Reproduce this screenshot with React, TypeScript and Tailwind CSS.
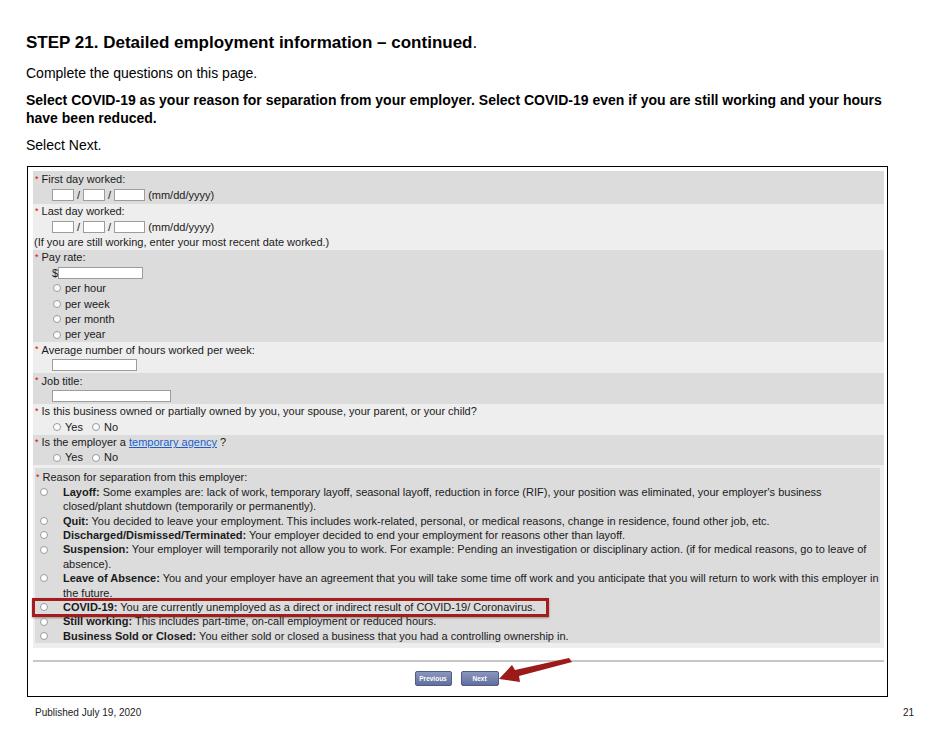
import React from "react";

const REASONS: { b: string; t: string[] }[] = [
  {
    b: "Layoff:",
    t: [
      " Some examples are: lack of work, temporary layoff, seasonal layoff, reduction in force (RIF), your position was eliminated, your employer's business",
      "closed/plant shutdown (temporarily or permanently).",
    ],
  },
  { b: "Quit:", t: [" You decided to leave your employment. This includes work-related, personal, or medical reasons, change in residence, found other job, etc."] },
  { b: "Discharged/Dismissed/Terminated:", t: [" Your employer decided to end your employment for reasons other than layoff."] },
  {
    b: "Suspension:",
    t: [
      " Your employer will temporarily not allow you to work. For example: Pending an investigation or disciplinary action. (if for medical reasons, go to leave of",
      "absence).",
    ],
  },
  {
    b: "Leave of Absence:",
    t: [
      " You and your employer have an agreement that you will take some time off work and you anticipate that you will return to work with this employer in",
      "the future.",
    ],
  },
  { b: "COVID-19:", t: [" You are currently unemployed as a direct or indirect result of COVID-19/ Coronavirus."] },
  { b: "Still working:", t: [" This includes part-time, on-call employment or reduced hours."] },
  { b: "Business Sold or Closed:", t: [" You either sold or closed a business that you had a controlling ownership in."] },
];

function Radio() {
  return <span className="inline-block h-[8px] w-[8px] rounded-full border border-[#9a9a9a] bg-white" />;
}

function Label({ children }: { children: React.ReactNode }) {
  return (
    <div className="flex h-[15.4px] items-center pl-[2px]">
      <span className="mr-[3px] text-[9px] text-[#e00000]">*</span>
      <span>{children}</span>
    </div>
  );
}

function Box({ w }: { w: number }) {
  return <span className="inline-block h-[12px] border border-[#9c9c9c] bg-white" style={{ width: w }} />;
}

function DateLine() {
  return (
    <div className="flex h-[15.4px] items-center pl-[19px]">
      <Box w={22} />
      <span className="mx-[3px]">/</span>
      <Box w={22} />
      <span className="mx-[3px]">/</span>
      <Box w={31} />
      <span className="ml-[3px]">(mm/dd/yyyy)</span>
    </div>
  );
}

function Opt({ label }: { label: string }) {
  return (
    <span className="inline-flex items-center">
      <Radio />
      <span className="ml-[4px]">{label}</span>
    </span>
  );
}

export default function App() {
  return (
    <div className="relative h-[735px] w-[950px] bg-white text-black" style={{ fontFamily: '"Liberation Sans", Arial, sans-serif' }}>
      <div className="px-[26px] pt-[33px]">
        <h1 className="text-[17px] leading-[20px] font-bold">
          STEP 21. Detailed employment information – continued<span className="font-normal">.</span>
        </h1>
        <p className="mt-[11px] text-[14px] leading-[18px]">Complete the questions on this page.</p>
        <p className="mt-[9px] pr-[14px] text-[14px] leading-[18px] font-bold">
          Select COVID-19 as your reason for separation from your employer. Select COVID-19 even if you are still working and your hours have been reduced.
        </p>
        <p className="mt-[9px] text-[14px] leading-[18px]">Select Next.</p>
      </div>

      <div className="mt-[12px] ml-[27px] h-[531px] w-[861px] border-[1.5px] border-black pt-[4px] pr-[3px] pl-[5px] text-[11px] text-[#1a1a1a]">
        <div className="bg-[#dcdcdc] py-[1px]">
          <Label>First day worked:</Label>
          <DateLine />
        </div>
        <div className="bg-[#eeeeee]">
          <Label>Last day worked:</Label>
          <DateLine />
          <div className="flex h-[15.4px] items-center pl-[1px]">(If you are still working, enter your most recent date worked.)</div>
        </div>
        <div className="bg-[#dcdcdc]">
          <Label>Pay rate:</Label>
          <div className="flex h-[15.4px] items-center pl-[19px]">
            $<span className="inline-block h-[12px] w-[85px] border border-[#9c9c9c] bg-white" />
          </div>
          {["per hour", "per week", "per month", "per year"].map((p) => (
            <div key={p} className="flex h-[15.4px] items-center pl-[20px]">
              <Opt label={p} />
            </div>
          ))}
        </div>
        <div className="bg-[#eeeeee]">
          <Label>Average number of hours worked per week:</Label>
          <div className="flex h-[15.4px] items-center pl-[19px]">
            <Box w={85} />
          </div>
        </div>
        <div className="bg-[#dcdcdc]">
          <Label>Job title:</Label>
          <div className="flex h-[15.4px] items-center pl-[19px]">
            <Box w={119} />
          </div>
        </div>
        <div className="bg-[#eeeeee]">
          <Label>Is this business owned or partially owned by you, your spouse, your parent, or your child?</Label>
          <div className="flex h-[15.4px] items-center gap-[9px] pl-[20px]">
            <Opt label="Yes" />
            <Opt label="No" />
          </div>
        </div>
        <div className="bg-[#dcdcdc]">
          <Label>
            Is the employer a <span className="text-[#1a5fd0] underline">temporary agency</span> ?
          </Label>
          <div className="flex h-[15.4px] items-center gap-[9px] pl-[20px]">
            <Opt label="Yes" />
            <Opt label="No" />
          </div>
        </div>

        <div className="bg-[#eeeeee] pt-[3px] pr-[4px] pb-[5px] pl-[2px]">
          <div className="bg-[#dcdcdc] pt-[2px]">
            <div className="flex h-[14.4px] items-center pl-[1px]">
              <span className="mr-[3px] text-[9px] text-[#e00000]">*</span>
              <span>Reason for separation from this employer:</span>
            </div>
            {REASONS.map((r) => (
              <div key={r.b} className="relative flex">
                <div className="flex h-[14.4px] w-[28px] shrink-0 items-center pl-[5px]">
                  <Radio />
                </div>
                <div>
                  {r.t.map((line, i) => (
                    <div key={i} className="h-[14.4px] leading-[14.4px] whitespace-nowrap">
                      {i === 0 && <span className="font-bold">{r.b}</span>}
                      {line}
                    </div>
                  ))}
                </div>
                {r.b === "COVID-19:" && (
                  <div className="pointer-events-none absolute top-[-2px] left-[-3px] h-[19px] w-[517px] border-[3px] border-[#a51c1c] shadow-[0_1px_2px_rgba(0,0,0,0.35)]" />
                )}
              </div>
            ))}
          </div>
        </div>

        <div className="mt-[12px] h-[2px] bg-[#c8c8c8]" />

        <div className="relative mt-[9px] flex justify-center gap-[9px] pr-[4px]">
          <button className="h-[15px] w-[37px] rounded-[2px] border border-[#4f5c88] bg-gradient-to-b from-[#8a96bd] to-[#626f9d] text-[6.5px] font-bold text-white">
            Previous
          </button>
          <button className="h-[15px] w-[38px] rounded-[2px] border border-[#4f5c88] bg-gradient-to-b from-[#8a96bd] to-[#626f9d] text-[6.5px] font-bold text-white">
            Next
          </button>
          <svg className="absolute top-[-15px] left-[466px]" width="76" height="30" viewBox="0 0 76 30">
            <polygon points="70,2 73,6 20,20 21,26 0,23 13,9 16,14" fill="#9d1a1a" />
          </svg>
        </div>
      </div>

      <div className="flex justify-between pt-[8px] pr-[36px] pl-[35px] text-[10px] text-[#222]">
        <span>Published July 19, 2020</span>
        <span>21</span>
      </div>
    </div>
  );
}
